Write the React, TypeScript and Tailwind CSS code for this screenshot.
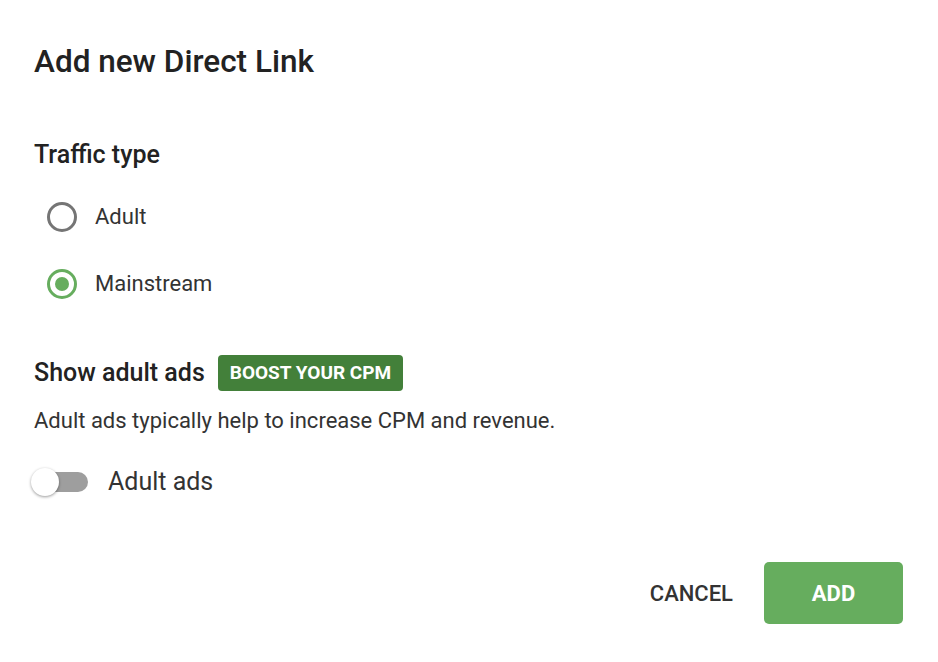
export default function App() {
  return (
    <div className="min-h-screen bg-white font-['Roboto',sans-serif] text-[#222222]">
      <div className="flex flex-col px-[34px] pt-[44px]">
        <h1 className="text-[31.5px] font-medium leading-[36px]">Add new Direct Link</h1>

        <h2 className="mt-[61px] text-[25px] font-medium leading-[28px]">Traffic type</h2>

        <div className="mt-[33px] flex flex-col gap-[37px] pl-[13px]">
          <label className="flex items-center gap-[18px]">
            <span className="flex h-[30px] w-[30px] items-center justify-center rounded-full border-[3px] border-[#757575]" />
            <span className="text-[22px] leading-[30px] text-[#333333]">Adult</span>
          </label>
          <label className="flex items-center gap-[18px]">
            <span className="flex h-[30px] w-[30px] items-center justify-center rounded-full border-[3px] border-[#66ad5e]">
              <span className="h-[14px] w-[14px] rounded-full bg-[#66ad5e]" />
            </span>
            <span className="text-[22px] leading-[30px] text-[#333333]">Mainstream</span>
          </label>
        </div>

        <div className="mt-[56px] flex items-center gap-[13px]">
          <h2 className="text-[25px] font-medium leading-[28px]">Show adult ads</h2>
          <span className="rounded-[4px] bg-[#43803a] px-[12px] py-[6px] text-[19px] font-bold leading-[24px] text-white">
            BOOST YOUR CPM
          </span>
        </div>

        <p className="mt-[16px] text-[22px] leading-[28px] text-[#333333]">
          Adult ads typically help to increase CPM and revenue.
        </p>

        <div className="mt-[32px] flex items-center gap-[18px]">
          <div className="relative h-[28px] w-[56px]">
            <span className="absolute left-[4px] top-[4px] h-[20px] w-[50px] rounded-full bg-[#9e9e9e]" />
            <span className="absolute left-[-3px] top-0 h-[28px] w-[28px] rounded-full bg-white shadow-[0_1px_3px_rgba(0,0,0,0.4)]" />
          </div>
          <span className="text-[25px] leading-[30px] text-[#333333]">Adult ads</span>
        </div>

        <div className="mt-[65px] flex items-center justify-end gap-[31px] pr-[1px]">
          <button className="text-[22px] font-medium text-[#333333]">CANCEL</button>
          <button className="h-[62px] w-[139px] rounded-[5px] bg-[#66ad5e] text-[22px] font-bold text-white">
            ADD
          </button>
        </div>
      </div>
    </div>
  );
}
